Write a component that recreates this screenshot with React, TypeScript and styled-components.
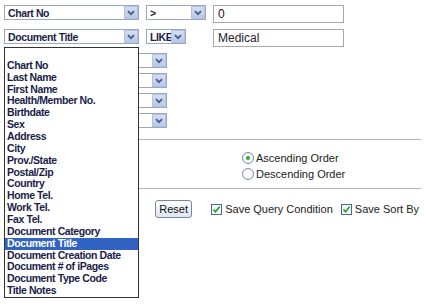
import React from "react";
import styled, { createGlobalStyle } from "styled-components";

const GlobalStyle = createGlobalStyle`
  html, body { margin: 0; padding: 0; background: #fff; }
  body { font-family: "Liberation Sans", Arial, sans-serif; }
`;

const Page = styled.div`
  position: relative;
  width: 427px;
  height: 304px;
  overflow: hidden;
  background: #fff;
`;

const Form = styled.div`
  display: flex;
  flex-direction: column;
  padding: 5px 0 0 4px;
`;

const Row = styled.div<{ $mt?: number }>`
  display: flex;
  align-items: flex-start;
  gap: 7px;
  margin-top: ${(p) => p.$mt ?? 0}px;
`;

/* fake windows-xp combo box */
const Select = styled.div<{ $w: number }>`
  box-sizing: border-box;
  width: ${(p) => p.$w}px;
  height: 15px;
  border: 1px solid #9aa8c0;
  background: #fff;
  display: flex;
  align-items: center;
`;

const SelectText = styled.span`
  flex: 1;
  padding-left: 3px;
  font-size: 10.5px;
  font-weight: bold;
  letter-spacing: -0.4px;
  color: #1a1d48;
  white-space: nowrap;
  overflow: hidden;
`;

const ArrowBtn = styled.span`
  box-sizing: border-box;
  width: 14px;
  height: 13px;
  border: 1px solid #b3c3e3;
  background: linear-gradient(#d3def5, #b7c8ea);
  display: flex;
  align-items: center;
  justify-content: center;
`;

const TextInput = styled.div<{ $ml?: number }>`
  box-sizing: border-box;
  width: 131px;
  height: 18px;
  border: 1px solid #a9a9a9;
  padding-left: 4px;
  margin-left: ${(p) => p.$ml ?? 0}px;
  font-size: 12px;
  line-height: 16px;
  color: #22222a;
`;

const SortRows = styled.div`
  display: flex;
  flex-direction: column;
  gap: 5px;
  margin-top: 6px;
`;

const Rule = styled.div<{ $mt: number }>`
  width: 417px;
  height: 1px;
  background: #b4b4b4;
  margin-top: ${(p) => p.$mt}px;
`;

const RadioGroup = styled.div`
  display: flex;
  flex-direction: column;
  padding-left: 238px;
  margin-top: 10px;
`;

const OptionLine = styled.label`
  display: flex;
  align-items: center;
  height: 16px;
  gap: 2px;
  font-size: 11px;
  color: #222;
`;

const Radio = styled.span<{ $on?: boolean }>`
  box-sizing: border-box;
  width: 12px;
  height: 12px;
  border-radius: 50%;
  border: 1px solid #7d8ea5;
  background: radial-gradient(circle, #fff 40%, #e3e8ee 100%);
  display: flex;
  align-items: center;
  justify-content: center;
  &::after {
    content: "";
    width: 4px;
    height: 4px;
    border-radius: 50%;
    background: ${(p) => (p.$on ? "#2aa82a" : "transparent")};
  }
`;

const ActionRow = styled.div`
  display: flex;
  align-items: center;
  margin-top: 11px;
  padding-left: 151px;
`;

const Button = styled.button`
  box-sizing: border-box;
  width: 41px;
  height: 18px;
  padding: 0;
  border: 1px solid #7486a6;
  border-radius: 3px;
  background: linear-gradient(#ffffff, #dfe5ef);
  font-family: "Liberation Sans", Arial, sans-serif;
  font-size: 11px;
  color: #111;
  margin-right: 19px;
`;

const Check = styled.label`
  display: flex;
  align-items: center;
  gap: 3px;
  font-size: 11px;
  color: #222;
  margin-right: 8px;
  white-space: nowrap;
`;

const Box = styled.span`
  box-sizing: border-box;
  width: 11px;
  height: 11px;
  border: 1px solid #4a6a92;
  background: #f4f6f8;
  display: flex;
  align-items: center;
  justify-content: center;
`;

/* the opened list of the second field select */
const ListBox = styled.div`
  position: absolute;
  left: 4px;
  top: 47px;
  width: 135px;
  box-sizing: border-box;
  border: 1px solid #333;
  background: #fff;
`;

const ListItem = styled.div<{ $sel?: boolean }>`
  height: 11.86px;
  line-height: 11.86px;
  padding-left: 2px;
  font-size: 10.5px;
  font-weight: bold;
  letter-spacing: -0.4px;
  white-space: nowrap;
  color: ${(p) => (p.$sel ? "#fff" : "#1a1d48")};
  background: ${(p) => (p.$sel ? "#3163c2" : "transparent")};
`;

const Chevron = () => (
  <svg width="8" height="6" viewBox="0 0 8 6">
    <path d="M1 1.2 L4 4.2 L7 1.2" fill="none" stroke="#4a5a80" strokeWidth="1.7" />
  </svg>
);

const Tick = () => (
  <svg width="9" height="9" viewBox="0 0 9 9">
    <path d="M1.5 4.5 L3.5 6.8 L7.6 1.8" fill="none" stroke="#21a121" strokeWidth="1.6" />
  </svg>
);

const Combo = ({ w, text }: { w: number; text?: string }) => (
  <Select $w={w}>
    <SelectText>{text}</SelectText>
    <ArrowBtn>
      <Chevron />
    </ArrowBtn>
  </Select>
);

const fields = [
  "",
  "Chart No",
  "Last Name",
  "First Name",
  "Health/Member No.",
  "Birthdate",
  "Sex",
  "Address",
  "City",
  "Prov./State",
  "Postal/Zip",
  "Country",
  "Home Tel.",
  "Work Tel.",
  "Fax Tel.",
  "Document Category",
  "Document Title",
  "Document Creation Date",
  "Document # of iPages",
  "Document Type Code",
  "Title Notes",
];

const App = () => {
  return (
    <Page>
      <GlobalStyle />
      <Form>
        <Row>
          <Combo w={135} text="Chart No" />
          <Combo w={60} text=">" />
          <TextInput>0</TextInput>
        </Row>
        <Row $mt={6}>
          <Combo w={135} text="Document Title" />
          <Combo w={40} text="LIKE" />
          <TextInput $ml={20}>Medical</TextInput>
        </Row>
        <SortRows>
          {[0, 1, 2, 3].map((i) => (
            <Combo key={i} w={163} />
          ))}
        </SortRows>
        <Rule $mt={11} />
        <RadioGroup>
          <OptionLine>
            <Radio $on />
            Ascending Order
          </OptionLine>
          <OptionLine>
            <Radio />
            Descending Order
          </OptionLine>
        </RadioGroup>
        <Rule $mt={6} />
        <ActionRow>
          <Button>Reset</Button>
          <Check>
            <Box>
              <Tick />
            </Box>
            Save Query Condition
          </Check>
          <Check>
            <Box>
              <Tick />
            </Box>
            Save Sort By
          </Check>
        </ActionRow>
      </Form>
      <ListBox>
        {fields.map((f, i) => (
          <ListItem key={i} $sel={f === "Document Title"}>
            {f}
          </ListItem>
        ))}
      </ListBox>
    </Page>
  );
};

export default App;
